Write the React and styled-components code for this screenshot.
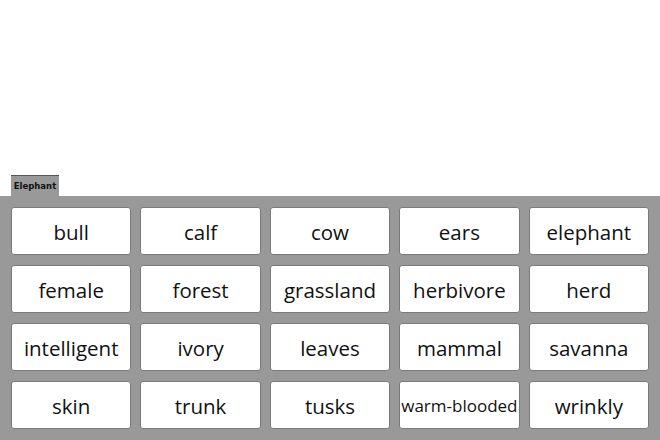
import styled, { createGlobalStyle } from "styled-components";

const words = [
    "bull", "calf", "cow", "ears", "elephant",
    "female", "forest", "grassland", "herbivore", "herd",
    "intelligent", "ivory", "leaves", "mammal", "savanna",
    "skin", "trunk", "tusks", "warm-blooded", "wrinkly",
];

const Global = createGlobalStyle`
    html, body {
        margin: 0;
        padding: 0;
        background: #ffffff;
    }
`;

const Page = styled.div`
    width: 660px;
    height: 440px;
    display: flex;
    flex-direction: column;
    justify-content: flex-end;
    overflow: hidden;
`;

const TabRow = styled.div`
    display: flex;
    padding-left: 11px;
`;

const Tab = styled.div`
    width: 48px;
    height: 20px;
    background-color: #999999;
    border-top: 1px solid #555555;
    font-family: "DejaVu Sans", sans-serif;
    font-weight: bold;
    font-size: 8.5px;
    color: #111;
    display: flex;
    align-items: center;
    justify-content: center;
`;

const Panel = styled.div`
    height: 244px;
    box-sizing: border-box;
    background-color: #999999;
    padding: 11px;
    display: grid;
    grid-template-columns: repeat(5, 1fr);
    grid-template-rows: repeat(4, 48px);
    column-gap: 9px;
    row-gap: 10px;
`;

const Card = styled.div`
    background-color: #ffffff;
    border: 1px solid #7a7a7a;
    border-radius: 3px;
    display: flex;
    align-items: center;
    justify-content: center;
    padding-top: 1px;
    font-family: "Open Sans", sans-serif;
    font-size: ${(p) => (p.$small ? "17px" : "20.5px")};
    color: #111;
    white-space: nowrap;
`;

const App = () => {
    return (
        <Page>
            <Global />
            <TabRow>
                <Tab>Elephant</Tab>
            </TabRow>
            <Panel>
                {words.map((w) => (
                    <Card key={w} $small={w.length > 11}>
                        {w}
                    </Card>
                ))}
            </Panel>
        </Page>
    );
};

export default App;
